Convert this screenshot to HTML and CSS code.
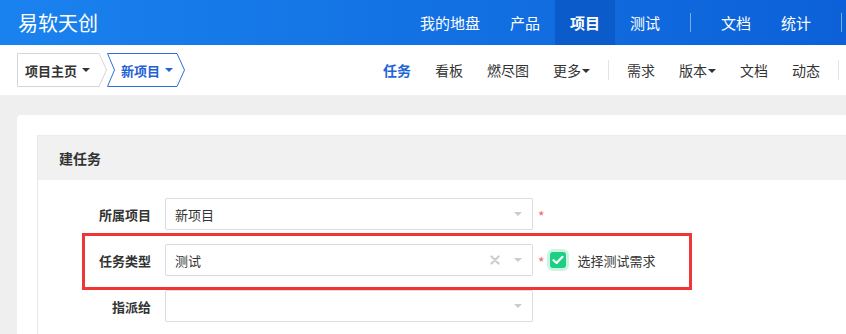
FILE: index.html
```html
<!DOCTYPE html>
<html lang="zh-CN">
<head>
  <meta charset="UTF-8">
  <meta name="viewport" content="width=device-width, initial-scale=1.0">
  <title>建任务 - 易软天创</title>
  <link rel="stylesheet" href="styles.css">
</head>
<body>

<header class="topbar">
  <div class="brand">易软天创</div>
  <nav class="mainnav">
    <a href="#">我的地盘</a>
    <a href="#">产品</a>
    <a href="#" class="active">项目</a>
    <a href="#">测试</a>
    <span class="sep"></span>
    <a href="#">文档</a>
    <a href="#">统计</a>
    <span class="sep"></span>
  </nav>
</header>

<div class="subbar">
  <div class="crumbs">
    <a href="#" class="crumb home">
      <svg class="crumb-shape" width="90" height="34" viewBox="0 0 90 34"><polygon points="0.5,0.5 82,0.5 89.5,17 82,33.5 0.5,33.5" fill="#fff" stroke="#d3d5dc"/></svg>
      <span>项目主页</span><i class="caret"></i>
    </a>
    <a href="#" class="crumb current">
      <svg class="crumb-shape" width="78" height="34" viewBox="0 0 78 34"><polygon points="0.5,0.5 70,0.5 77.5,17 70,33.5 0.5,33.5 7.5,17" fill="#fff" stroke="#2b6fe2"/></svg>
      <span>新项目</span><i class="caret"></i>
    </a>
  </div>
  <nav class="subnav">
    <a href="#" class="active">任务</a>
    <a href="#">看板</a>
    <a href="#">燃尽图</a>
    <a href="#">更多<i class="caret"></i></a>
    <span class="sep"></span>
    <a href="#">需求</a>
    <a href="#">版本<i class="caret"></i></a>
    <a href="#">文档</a>
    <a href="#">动态</a>
    <span class="sep"></span>
  </nav>
</div>

<main class="content">
  <div class="card">
    <div class="panel">
      <div class="panel-head">建任务</div>
      <div class="panel-body">
        <div class="row">
          <label class="label">所属项目</label>
          <div class="select">
            <span class="value">新项目</span>
            <i class="arrow"></i>
          </div>
          <span class="required">*</span>
        </div>
        <div class="row marked">
          <label class="label">任务类型</label>
          <div class="select">
            <span class="value">测试</span>
            <svg class="clear" width="10" height="10" viewBox="0 0 10 10"><path d="M1.5 1.5 L8.5 8.5 M8.5 1.5 L1.5 8.5" stroke="#cfcfcf" stroke-width="2.4" stroke-linecap="round"/></svg>
            <i class="arrow"></i>
          </div>
          <span class="required">*</span>
          <span class="check">
            <svg width="12" height="10" viewBox="0 0 12 10"><path d="M1.5 5.2 L4.6 8 L10.5 1.8" fill="none" stroke="#fff" stroke-width="2.2" stroke-linecap="round" stroke-linejoin="round"/></svg>
          </span>
          <span class="check-text">选择测试需求</span>
          <div class="highlight"></div>
        </div>
        <div class="row">
          <label class="label">指派给</label>
          <div class="select">
            <span class="value"></span>
            <i class="arrow"></i>
          </div>
        </div>
      </div>
    </div>
  </div>
</main>

</body>
</html>
```

FILE: styles.css
```css
body {
  margin: 0;
  width: 846px;
  height: 334px;
  overflow: hidden;
  background: #efefef;
  color: #333;
  font-family: "Noto Sans CJK SC", "Noto Sans", sans-serif;
  font-size: 13px;
}

a {
  text-decoration: none;
  color: inherit;
}

/* top blue bar */
.topbar {
  display: flex;
  align-items: stretch;
  height: 45px;
  overflow: hidden;
  background: linear-gradient(90deg, #1a82ee, #0c61d8);
  color: #fff;
}

.brand {
  flex: 0 0 405px;
  box-sizing: border-box;
  padding-left: 18px;
  font-size: 20px;
  line-height: 45px;
}

.mainnav {
  display: flex;
  align-items: center;
  flex: none;
}

.mainnav a {
  padding: 0 15px;
  font-size: 15px;
  line-height: 45px;
}

.mainnav a.active {
  background: #0c5bca;
  font-weight: bold;
}

.mainnav .sep {
  width: 1px;
  height: 19px;
  margin: 0 15px;
  background: rgba(255, 255, 255, 0.45);
}

/* white sub bar */
.subbar {
  display: flex;
  align-items: center;
  height: 50px;
  background: #fff;
  overflow: hidden;
}

.crumbs {
  flex: 0 0 371px;
  box-sizing: border-box;
  display: flex;
  padding-left: 17px;
}

.crumb {
  position: relative;
  display: flex;
  align-items: center;
  height: 34px;
  font-weight: bold;
  font-size: 13px;
}

.crumb-shape {
  position: absolute;
  left: 0;
  top: 0;
}

.crumb span,
.crumb .caret {
  position: relative;
}

.crumb.home {
  width: 90px;
  padding-left: 8px;
  box-sizing: border-box;
}

.crumb.current {
  width: 78px;
  padding-left: 14px;
  box-sizing: border-box;
  color: #2260d4;
}

.caret {
  display: inline-block;
  width: 0;
  height: 0;
  margin-left: 5px;
  border-left: 4px solid transparent;
  border-right: 4px solid transparent;
  border-top: 4px solid currentColor;
  vertical-align: middle;
}

.subnav {
  display: flex;
  align-items: center;
  flex: none;
}

.subnav a {
  padding: 0 12px;
  font-size: 14px;
  line-height: 50px;
}

.subnav a .caret {
  margin-left: 1px;
  position: relative;
  top: -1px;
}

.subnav a.active {
  color: #1f66d6;
  font-weight: bold;
}

.subnav .sep {
  width: 1px;
  height: 20px;
  margin: 0 6px;
  background: #e4e4e4;
}

/* main area */
.content {
  padding: 20px 0 0 17px;
}

.card {
  background: #fff;
  border-radius: 4px 0 0 0;
  padding: 20px 0 0 20px;
  height: 199px;
}

.panel {
  border-left: 1px solid #e6e6e6;
  height: 100%;
}

.panel-head {
  height: 45px;
  line-height: 45px;
  padding-left: 21px;
  background: #f1f1f1;
  border-top: 1px solid #ececec;
  box-sizing: border-box;
  font-size: 14px;
  font-weight: bold;
}

.panel-body {
  padding-top: 18px;
}

.row {
  display: flex;
  align-items: center;
  height: 32px;
  margin-bottom: 14px;
}

.row.marked {
  position: relative;
}

.label {
  flex: 0 0 113px;
  margin-right: 14px;
  text-align: right;
  font-weight: bold;
  font-size: 13px;
}

.select {
  display: flex;
  align-items: center;
  width: 368px;
  height: 32px;
  box-sizing: border-box;
  border: 1px solid #dcdcdc;
  border-radius: 2px;
  padding: 0 9px;
}

.select .value {
  flex: 1;
  font-size: 13px;
}

.select .clear {
  margin-right: 14px;
}

.select .arrow {
  width: 0;
  height: 0;
  margin-right: 1px;
  border-left: 4px solid transparent;
  border-right: 4px solid transparent;
  border-top: 4px solid #c9cad3;
}

.required {
  margin-left: 5px;
  color: #f2696b;
  font-size: 14px;
  line-height: 14px;
  padding-top: 3px;
}

.check {
  display: flex;
  align-items: center;
  justify-content: center;
  width: 16px;
  height: 16px;
  margin-left: 5px;
  border-radius: 3px;
  background: #1ccf82;
  box-shadow: 0 0 0 3px #cbf5e1;
}

.check-text {
  margin-left: 12px;
  font-size: 13px;
}

/* annotation frame */
.highlight {
  position: absolute;
  left: 44px;
  top: -11px;
  width: 610px;
  height: 57px;
  box-sizing: border-box;
  border: 3px solid #ef3535;
  pointer-events: none;
}
```
